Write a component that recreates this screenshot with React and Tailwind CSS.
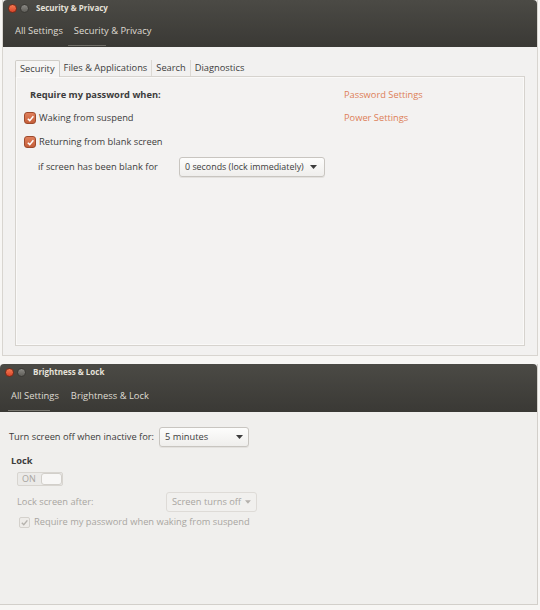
import React from "react";

const font = { fontFamily: '"Open Sans", "DejaVu Sans", sans-serif' };

function TitleBar({ title, items }) {
  return (
    <div className="bg-gradient-to-b from-[#4b4a45] to-[#3a3935] text-[#dfdbd2] rounded-t-[4px]">
      <div className="flex items-center h-[16px] pl-[5px] gap-[3px]">
        <span className="w-[9px] h-[9px] rounded-full bg-gradient-to-b from-[#f47a52] to-[#d9442a] border border-[#7a2a18]"></span>
        <span className="w-[9px] h-[9px] rounded-full bg-gradient-to-b from-[#8b8a85] to-[#5e5d58] border border-[#3a3935]"></span>
        <span className="ml-[4px] text-[8px] font-bold text-[#e6e2da] leading-none whitespace-nowrap">{title}</span>
      </div>
      {items}
    </div>
  );
}

function Check({ disabled }) {
  if (disabled) {
    return (
      <span className="w-[11px] h-[11px] rounded-[2px] border border-[#d4d1cc] bg-[#eeece9] flex items-center justify-center">
        <svg width="9" height="9" viewBox="0 0 10 10"><path d="M2 5.2 L4.2 7.4 L8.2 2.6" fill="none" stroke="#b5b2ad" strokeWidth="1.6" /></svg>
      </span>
    );
  }
  return (
    <span className="w-[12px] h-[12px] rounded-[3px] border border-[#9e4a2c] bg-gradient-to-b from-[#e0805c] to-[#c55f3a] flex items-center justify-center">
      <svg width="9" height="9" viewBox="0 0 10 10"><path d="M2 5.2 L4.2 7.4 L8.2 2.6" fill="none" stroke="#ffffff" strokeWidth="1.7" /></svg>
    </span>
  );
}

function Caret({ color = "#3c3c3c" }) {
  return (
    <svg width="7" height="4" viewBox="0 0 7 4"><path d="M0 0 L7 0 L3.5 4 Z" fill={color} /></svg>
  );
}

export default function App() {
  return (
    <div className="w-[540px] h-[610px] bg-[#f7f6f4] relative overflow-hidden text-[9.3px] whitespace-nowrap" style={font}>
      {/* Window 1 */}
      <div className="mx-[2px] w-[536px] h-[356px] border border-[#d8d5d0] border-t-0 bg-[#f2f1f0] flex flex-col">
        <TitleBar
          title="Security & Privacy"
          items={
            <div className="h-[31px] flex items-center pl-[12px] gap-[11px] text-[9.4px] text-[#dfdbd2]">
              <span>All Settings</span>
              <span className="relative">Security &amp; Privacy
                <span className="absolute left-[-6px] bottom-[-7px] w-[38px] h-[1px] bg-[#6e6c66]"></span>
              </span>
            </div>
          }
        />
        <div className="flex-1 flex flex-col px-[12px] pt-[13px] pb-[9px]">
          <div className="flex items-end h-[16px] text-[#3c3c3c]">
            <div className="h-[17px] px-[4px] border border-[#d0cdc8] border-b-0 bg-[#f6f5f4] rounded-t-[2px] flex items-center relative z-10 -mb-[1px]">Security</div>
            <div className="h-[16px] px-[4px] flex items-center border-r border-[#dcd9d4]">Files &amp; Applications</div>
            <div className="h-[16px] px-[4px] flex items-center border-r border-[#dcd9d4]">Search</div>
            <div className="h-[16px] px-[4px] flex items-center">Diagnostics</div>
          </div>
          <div className="flex-1 border border-[#d6d3ce] bg-[#f3f2f1] shadow-[inset_0_0_0_1px_#faf9f8] relative">
            <div className="pt-[11px] pl-[9px] flex">
              <div className="w-[319px] flex flex-col text-[#3c3c3c]">
                <div className="h-[14px] flex items-center pl-[5px] font-bold">Require my password when:</div>
                <div className="h-[24px] mt-[4px] flex items-center gap-[3px] -ml-[1px]"><Check /><span>Waking from suspend</span></div>
                <div className="h-[24px] flex items-center gap-[3px] -ml-[1px]"><Check /><span>Returning from blank screen</span></div>
                <div className="h-[24px] mt-[1px] flex items-center pl-[13px]">
                  <span className="w-[141px]">if screen has been blank for</span>
                  <div className="h-[20px] w-[146px] border border-[#c8c5c0] rounded-[3px] bg-gradient-to-b from-[#fdfdfc] to-[#efeeec] shadow-[0_1px_0_#e3e1de] flex items-center pl-[5px] pr-[7px] justify-between">
                    <span className="text-[8.9px]">0 seconds (lock immediately)</span>
                    <Caret />
                  </div>
                </div>
              </div>
              <div className="flex flex-col text-[#dd8058]">
                <div className="h-[14px] flex items-center">Password Settings</div>
                <div className="h-[24px] mt-[4px] flex items-center">Power Settings</div>
              </div>
            </div>
          </div>
        </div>
      </div>

      {/* Window 2 */}
      <div className="mt-[8px] w-[538px] h-[241px] border-r border-b border-[#d2cfca] bg-[#f0efed] flex flex-col">
        <TitleBar
          title="Brightness & Lock"
          items={
            <div className="h-[32px] flex items-center pl-[11px] gap-[12px] text-[9.4px] text-[#dfdbd2]">
              <span className="relative">All Settings
                <span className="absolute left-[-3px] bottom-[-8px] w-[42px] h-[1px] bg-[#78766f]"></span>
              </span>
              <span>Brightness &amp; Lock</span>
            </div>
          }
        />
        <div className="flex-1 flex flex-col pl-[9px] pt-[15px] text-[#3c3c3c]">
          <div className="flex items-center h-[20px]">
            <span>Turn screen off when inactive for:</span>
            <div className="ml-[5px] h-[20px] w-[90px] border border-[#c8c5c0] rounded-[3px] bg-gradient-to-b from-[#fdfdfc] to-[#efeeec] shadow-[0_1px_0_#e3e1de] flex items-center px-[5px] justify-between">
              <span>5 minutes</span>
              <Caret />
            </div>
          </div>
          <div className="mt-[6px] h-[16px] flex items-center pl-[2px] font-bold">Lock</div>
          <div className="mt-[3px] ml-[8px] w-[46px] h-[14px] border border-[#d8d5d0] rounded-[2px] bg-[#ebeae8] flex items-center">
            <span className="pl-[4px] text-[9px] text-[#a8a5a0] w-[22px]">ON</span>
            <span className="ml-[1px] w-[22px] h-[12px] rounded-[3px] border border-[#d2cfca] bg-[#f8f7f6]"></span>
          </div>
          <div className="mt-[6px] h-[20px] flex items-center pl-[8px] text-[#a9a6a1]">
            <span className="w-[149px]">Lock screen after:</span>
            <div className="h-[20px] w-[91px] border border-[#dedbd7] rounded-[3px] bg-[#f1f0ee] flex items-center px-[5px] gap-[4px]">
              <span>Screen turns off</span>
              <Caret color="#b4b1ac" />
            </div>
          </div>
          <div className="mt-[0px] h-[20px] flex items-center pl-[10px] gap-[4px] text-[#a9a6a1]">
            <Check disabled />
            <span>Require my password when waking from suspend</span>
          </div>
        </div>
      </div>
    </div>
  );
}
